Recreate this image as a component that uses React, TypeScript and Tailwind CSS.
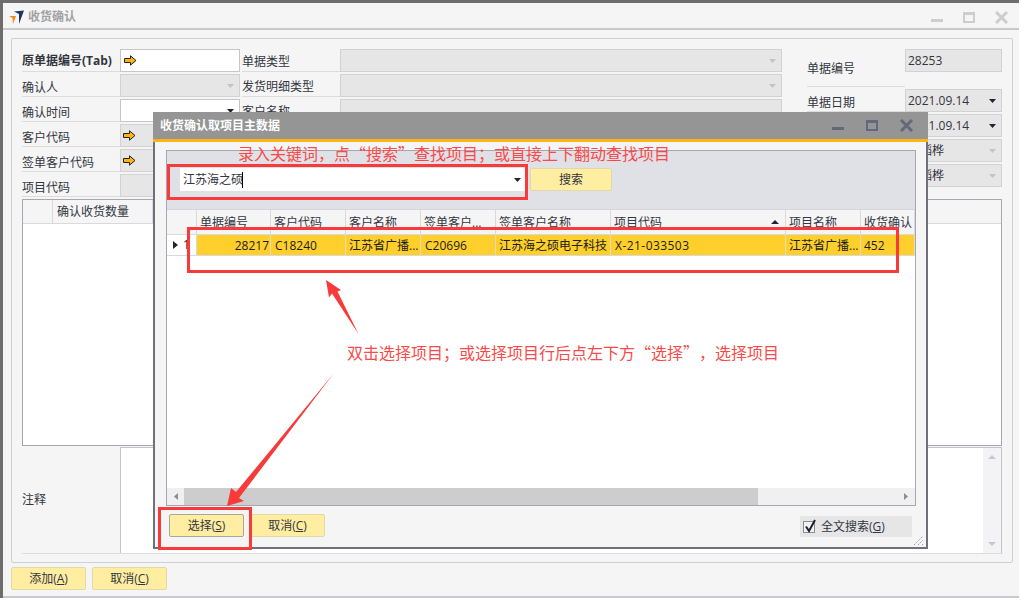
import React from 'react'

const fontClass = "font-['Open_Sans','Noto_Sans_CJK_SC',sans-serif]"

const ArrowIcon = () => (
  <svg width="13" height="11" viewBox="0 0 13 11" className="shrink-0">
    <path d="M0.5 3.5H6.5V0.8L12 5.5L6.5 10.2V7.5H0.5Z" fill="#ffb20f" stroke="#222" strokeWidth="1" />
  </svg>
)

const Caret = ({ muted = false }: { muted?: boolean }) => (
  <svg width="7" height="4" viewBox="0 0 7 4" className="shrink-0">
    <path d="M0 0H7L3.5 4Z" fill={muted ? '#c4c4c8' : '#1f2430'} />
  </svg>
)

const Row = ({ label, bold = false, tight = false, width, children }: { label: string; bold?: boolean; tight?: boolean; width: string; children?: React.ReactNode }) => (
  <div className="flex h-[23px]">
    <div className={`w-[98px] shrink-0 border-b border-[#dcdcdc] text-[#33363f] ${bold ? 'font-bold leading-[24px]' : tight ? 'leading-[25px]' : 'leading-[27px]'}`}>{label}</div>
    <div className={`${width} shrink-0`}>{children}</div>
  </div>
)

const GrayBox = ({ caret, muted, value, arrow }: { caret?: boolean; muted?: boolean; value?: string; arrow?: boolean }) => (
  <div className="flex h-full items-center justify-between border border-[#d2d2d4] bg-[#e6e6e6] pl-[2px] pr-[5px] text-[#33363f]">
    <div className="flex items-center gap-1">
      {arrow && <ArrowIcon />}
      {value}
    </div>
    {caret && <Caret muted={muted} />}
  </div>
)

const WhiteBox = ({ caret, arrow }: { caret?: boolean; arrow?: boolean }) => (
  <div className="flex h-full items-center justify-between border border-[#c5c5cb] bg-white pl-[3px] pr-[5px]">
    <div>{arrow && <ArrowIcon />}</div>
    {caret && <Caret />}
  </div>
)

const YellowButton = ({ label, hot, width = 'w-[75px]', dark = false }: { label: string; hot?: string; width?: string; dark?: boolean }) => (
  <button className={`${width} h-[23px] rounded-[2px] border ${dark ? 'border-[#a9a69a]' : 'border-[#e3d9a4]'} bg-[#ffeda1] text-center leading-[22px] text-[#33363f]`}>
    {label}
    {hot && (
      <>
        (<span className="underline">{hot}</span>)
      </>
    )}
  </button>
)

const dialogCols = [
  { title: '单据编号', width: 'w-[74px]', value: '28217', cell: 'pl-[3px] pr-[1px] text-right' },
  { title: '客户代码', width: 'w-[75px]', value: 'C18240', cell: 'pl-[4px]' },
  { title: '客户名称', width: 'w-[75px]', value: '江苏省广播...', cell: 'pl-[3px]' },
  { title: '签单客户...', width: 'w-[75px]', value: 'C20696', cell: 'pl-[4px]' },
  { title: '签单客户名称', width: 'w-[115px]', value: '江苏海之硕电子科技', cell: 'pl-[3px]' },
  { title: '项目代码', width: 'w-[175px]', value: 'X-21-033503', cell: 'pl-[4px] tracking-[0.45px]', sort: true },
  { title: '项目名称', width: 'w-[75px]', value: '江苏省广播...', cell: 'pl-[3px]' },
  { title: '收货确认', width: 'w-[54px]', value: '452', cell: 'pl-[3px]' },
]

const Dialog = () => (
  <div className="absolute left-[153px] top-[112px] flex h-[437px] w-[775px] flex-col border-b-2 border-l-2 border-r-2 border-[#6f707a] bg-[#f5f5f6]">
    {/* title */}
    <div className="-mx-[2px] flex h-[27px] shrink-0 items-center justify-between bg-[#959595] pl-[7px] pr-[15px] text-white">
      <span className="font-bold">收货确认取项目主数据</span>
      <div className="flex items-center gap-[22px]">
        <div className="mt-[5px] h-[3px] w-[12px] bg-[#62697a]" />
        <div className="h-[11px] w-[12px] border-2 border-t-[3px] border-[#62697a]" />
        <svg width="13" height="13" viewBox="0 0 13 13">
          <path d="M1 1L12 12M12 1L1 12" stroke="#62697a" strokeWidth="3" />
        </svg>
      </div>
    </div>
    <div className="-mx-[2px] h-[3px] shrink-0 bg-[#fbb612]" />

    {/* search + grid */}
    <div className="ml-[11px] mr-[11px] mt-[8px] flex h-[356px] w-[750px] flex-col border border-[#a6a7b1] bg-white">
      <div className="flex h-[59px] shrink-0 items-start gap-[5px] border-b border-[#d5d6dc] bg-[#e0e1e6] pl-[13px] pt-[17px]">
        <div className="flex h-[23px] w-[345px] items-center justify-between bg-white pl-[3px] pr-[4px] text-[#33363f]">
          <span className="flex items-center">
            江苏海之硕<span className="ml-[-1px] h-[16px] w-px bg-black" />
          </span>
          <Caret />
        </div>
        <YellowButton label="搜索" width="w-[82px]" />
      </div>
      <div className="flex h-[25px] shrink-0 overflow-hidden border-b border-[#d9d9de] bg-[#f5f5f6] text-[#33363f]">
        <div className="w-[30px] shrink-0 border-r border-[#d9d9de]" />
        {dialogCols.map((col) => (
          <div key={col.title} className={`${col.width} relative shrink-0 overflow-hidden whitespace-nowrap border-r border-[#d9d9de] pl-[3px] leading-[25px]`}>
            {col.title}
            {col.sort && (
              <svg width="8" height="4" viewBox="0 0 8 4" className="absolute right-[6px] top-[10px]">
                <path d="M4 0L8 4H0Z" fill="#1f2430" />
              </svg>
            )}
          </div>
        ))}
      </div>
      <div className="flex h-[21px] shrink-0 border-b border-[#d9d9de] text-[#1d1d1d]">
        <div className="flex w-[30px] shrink-0 items-center gap-[5px] border-r border-[#d9d9de] pl-[6px]">
          <svg width="5" height="8" viewBox="0 0 5 8" className="shrink-0">
            <path d="M0 0L5 4L0 8Z" fill="#1f2430" />
          </svg>
          <span>1</span>
        </div>
        {dialogCols.map((col) => (
          <div
            key={col.title}
            className={`${col.width} ${col.cell} shrink-0 overflow-hidden whitespace-nowrap border-r border-[#e2dcc0] bg-[#ffcf2b] leading-[21px]`}
          >
            {col.value}
          </div>
        ))}
      </div>
      <div className="min-h-0 flex-1" />
      {/* horizontal scrollbar */}
      <div className="flex h-[17px] shrink-0 items-center bg-[#f0f0f1]">
        <div className="flex w-[17px] justify-center">
          <svg width="4" height="7" viewBox="0 0 4 7">
            <path d="M4 0L0 3.5L4 7Z" fill="#8a8c96" />
          </svg>
        </div>
        <div className="h-full w-[574px] bg-[#cdcdcd]" />
        <div className="flex flex-1 justify-end pr-[7px]">
          <svg width="4" height="7" viewBox="0 0 4 7">
            <path d="M0 0L4 3.5L0 7Z" fill="#8a8c96" />
          </svg>
        </div>
      </div>
    </div>

    {/* bottom buttons */}
    <div className="mt-[8px] flex h-[23px] items-start pl-[14px]">
      <YellowButton label="选择" hot="S" dark />
      <div className="ml-[6px]">
        <YellowButton label="取消" hot="C" />
      </div>
      <div className="ml-auto mr-[14px] mt-[2px] flex h-[21px] w-[112px] items-center gap-[4px] bg-[#e6e6e6] pl-[3px] text-[#33363f]">
        <svg width="14" height="15" viewBox="0 0 14 15" className="shrink-0">
          <rect x="0.5" y="2.5" width="11" height="11" fill="#f2f2f4" stroke="#8a8c96" />
          <path d="M3 7.5L6 12L12 1" fill="none" stroke="#1e2230" strokeWidth="2" />
        </svg>
        <span>
          全文搜索(<span className="underline">G</span>)
        </span>
      </div>
    </div>
    <svg width="11" height="11" viewBox="0 0 11 11" className="absolute bottom-[1px] right-[2px]">
      <path d="M1 10L10 1M5 10L10 5M9 10L10 9" stroke="#9a9ba3" strokeDasharray="1.5 1" />
    </svg>
  </div>
)

const Annotations = () => (
  <>
    <div className="absolute left-[167px] top-[164px] h-[36px] w-[361px] border-[3px] border-[#f83a3a]" />
    <div className="absolute left-[187px] top-[227px] h-[46px] w-[712px] border-[3px] border-[#f83a3a]" />
    <div className="absolute left-[158px] top-[507px] h-[43px] w-[94px] border-[3px] border-[#f83a3a]" />
    <div className="absolute left-[238px] top-[141px] whitespace-nowrap font-['Noto_Sans_CJK_SC',sans-serif] text-[16px] leading-[24px] text-[#f84a4a] [text-spacing-trim:space-all]">录入关键词，点“搜索”查找项目；或直接上下翻动查找项目</div>
    <div className="absolute left-[347px] top-[340px] whitespace-nowrap font-['Noto_Sans_CJK_SC',sans-serif] text-[16px] leading-[24px] text-[#f84a4a] [text-spacing-trim:space-all]">双击选择项目；或选择项目行后点左下方“选择”，选择项目</div>
    <svg width="1021" height="600" viewBox="0 0 1021 600" className="pointer-events-none absolute left-0 top-0">
      <polygon points="326,280 341,290 337.5,291.5 358.5,334 332,293.5 329,297.5" fill="#f83a3a" />
      <polygon points="227,506 231,488 236,492 334,373 239,498 244,501" fill="#f83a3a" />
    </svg>
  </>
)

export default function App() {
  return (
    <div className={`relative h-[600px] w-[1021px] overflow-hidden bg-white text-[12px] ${fontClass}`}>
      <div className="flex h-[598px] w-[1019px] flex-col border-l-[3px] border-t-[3px] border-[#6d6d6d] bg-[#f5f5f5]">
        {/* title bar */}
        <div className="flex h-[27px] shrink-0 items-center justify-between border-b-2 border-[#c9c9c9] pl-[6px] pr-[11px] pt-[3px]">
          <div className="flex items-center gap-[3px]">
            <svg width="16" height="15" viewBox="0 0 16 15">
              <path d="M5 1.5L15 0.5L10 14L10 4Z" fill="#1c3763" />
              <path d="M0 6L7 6L4 14L3.5 8Z" fill="#f08a1d" />
            </svg>
            <span className="font-bold text-[#a2a2a4]">收货确认</span>
          </div>
          <div className="flex items-center gap-[20px]">
            <div className="mt-[6px] h-[3px] w-[12px] bg-[#cdcdcf]" />
            <div className="h-[11px] w-[12px] border-2 border-t-[3px] border-[#cdcdcf]" />
            <svg width="13" height="13" viewBox="0 0 13 13">
              <path d="M1 1L12 12M12 1L1 12" stroke="#cdcdcf" strokeWidth="3" />
            </svg>
          </div>
        </div>

        {/* group */}
        <div className="ml-[8px] mt-[8px] flex h-[525px] w-[1002px] flex-col rounded-[2px] border border-[#cfcfd4] pl-[10px] pr-[9px] pt-[10px]">
          <div className="flex shrink-0">
            <div className="flex w-[220px] shrink-0 flex-col gap-[2px]">
              <Row label="原单据编号(Tab)" bold width="w-[120px]"><WhiteBox arrow /></Row>
              <Row label="确认人" width="w-[120px]"><GrayBox caret muted /></Row>
              <Row label="确认时间" width="w-[120px]"><WhiteBox caret /></Row>
              <Row label="客户代码" width="w-[120px]"><GrayBox arrow /></Row>
              <Row label="签单客户代码" width="w-[120px]"><GrayBox arrow /></Row>
              <Row label="项目代码" width="w-[120px]"><GrayBox /></Row>
            </div>
            <div className="flex w-[540px] shrink-0 flex-col gap-[2px]">
              <Row label="单据类型" tight width="w-[442px]"><GrayBox caret muted /></Row>
              <Row label="发货明细类型" tight width="w-[442px]"><GrayBox caret muted /></Row>
              <Row label="客户名称" tight width="w-[442px]"><GrayBox /></Row>
            </div>
            <div className="ml-[25px] flex w-[195px] shrink-0 flex-col gap-[2px]">
              <div className="flex h-[38px]">
                <div className="w-[98px] shrink-0 border-b border-[#dcdcdc] pt-[11px] leading-[18px] text-[#33363f]">单据编号</div>
                <div className="h-[23px] w-[97px] shrink-0"><GrayBox value="28253" /></div>
              </div>
              <Row label="单据日期" width="w-[97px]"><GrayBox value="2021.09.14" caret /></Row>
              <Row label="" width="w-[97px]"><GrayBox value="2021.09.14" caret /></Row>
              <Row label="" width="w-[97px]"><GrayBox value="周韬桦" caret muted /></Row>
              <Row label="" width="w-[97px]"><GrayBox value="周韬桦" caret muted /></Row>
            </div>
          </div>

          {/* main grid */}
          <div className="mt-[2px] h-[247px] w-[980px] shrink-0 border border-[#a6a7b1] bg-white">
            <div className="flex h-[24px] border-b border-[#d9d9de] bg-[#f5f5f6] text-[#33363f]">
              <div className="w-[30px] border-r border-[#d9d9de]" />
              <div className="w-[100px] border-r border-[#d9d9de] pl-[4px] leading-[24px]">确认收货数量</div>
            </div>
          </div>

          {/* notes */}
          <div className="mt-[1px] flex h-[107px] shrink-0 border-b border-[#dcdcdc]">
            <div className="flex w-[98px] shrink-0 items-center text-[#33363f]">注释</div>
            <div className="flex w-[882px] shrink-0 justify-end border-l border-r border-t border-[#c5c5cb] bg-white">
              <div className="flex w-[18px] flex-col items-center justify-between bg-[#f3f3f5] py-[7px]">
                <svg width="8" height="4" viewBox="0 0 8 4"><path d="M4 0L8 4H0Z" fill="#c8c9ce" /></svg>
                <svg width="8" height="4" viewBox="0 0 8 4"><path d="M0 0H8L4 4Z" fill="#c8c9ce" /></svg>
              </div>
            </div>
          </div>
        </div>

        {/* footer */}
        <div className="ml-[8px] mt-[4px] flex gap-[6px]">
          <YellowButton label="添加" hot="A" />
          <YellowButton label="取消" hot="C" />
        </div>
        <div className="mt-auto h-[2px] bg-[#c9c9d0]" />
      </div>
      <Dialog />
      <Annotations />
    </div>
  )
}
